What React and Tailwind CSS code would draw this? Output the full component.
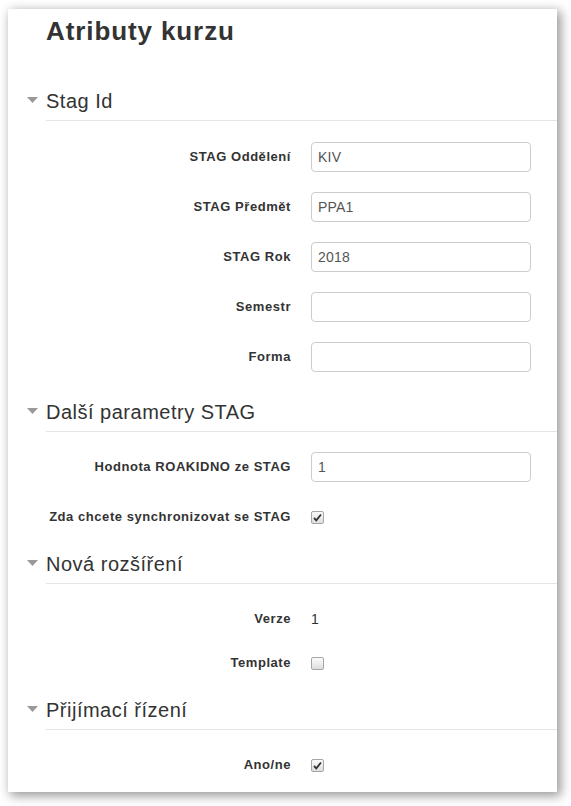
const font = { fontFamily: '"Liberation Sans", Arial, sans-serif' };

const Check = ({ checked }) => (
  <span className="flex h-[13px] w-[13px] items-center justify-center rounded-[2px] border border-[#a6a6a6] bg-gradient-to-b from-[#fbfbfb] to-[#dedede]">
    {checked && (
      <svg width="9" height="9" viewBox="0 0 9 9">
        <path d="M1 5 L3.3 7.3 L8 1.5" fill="none" stroke="#333" strokeWidth="1.8" />
      </svg>
    )}
  </span>
);

const Header = ({ title }) => (
  <div className="relative flex h-[41px] items-center border-b border-[#e5e5e5] pt-[1px]">
    <svg className="absolute left-[-19px] top-[17px]" width="11" height="6" viewBox="0 0 11 6">
      <path d="M0 0 L11 0 L5.5 6 Z" fill="#999" />
    </svg>
    <span className="text-[20px] tracking-[0.5px] text-[#333]">{title}</span>
  </div>
);

const Row = ({ label, children, mb }) => (
  <div className={`flex h-[30px] items-center ${mb}`}>
    <div className="w-[245px] text-right text-[13px] font-bold tracking-[0.55px] text-[#333]">{label}</div>
    <div className="ml-[20px] flex items-center">{children}</div>
  </div>
);

const Input = ({ value }) => (
  <div className="flex h-[30px] w-[220px] items-center rounded-[4px] border border-[#ccc] px-[6px] text-[14px] tracking-[0.2px] text-[#555]">
    {value}
  </div>
);

export default function App() {
  return (
    <div className="min-h-[806px] bg-white pl-[8px] pt-[9px]" style={font}>
      <div className="w-[549px] bg-white pb-[12px] pl-[38px] shadow-[3px_3px_10px_1px_rgba(0,0,0,0.4)]">
        <h2 className="flex h-[38px] items-end text-[26px] font-bold leading-[32px] tracking-[0.9px] text-[#333]">Atributy kurzu</h2>

        <div className="mt-[33px]">
          <Header title="Stag Id" />
          <div className="pt-[21px]">
            <Row label="STAG Oddělení" mb="mb-[20px]"><Input value="KIV" /></Row>
            <Row label="STAG Předmět" mb="mb-[20px]"><Input value="PPA1" /></Row>
            <Row label="STAG Rok" mb="mb-[20px]"><Input value="2018" /></Row>
            <Row label="Semestr" mb="mb-[20px]"><Input value="" /></Row>
            <Row label="Forma" mb="mb-[19px]"><Input value="" /></Row>
          </div>
        </div>

        <Header title="Další parametry STAG" />
        <div className="pt-[20px]">
          <Row label="Hodnota ROAKIDNO ze STAG" mb="mb-[20px]"><Input value="1" /></Row>
          <Row label="Zda chcete synchronizovat se STAG" mb="mb-[11px]"><Check checked /></Row>
        </div>

        <Header title="Nová rozšíření" />
        <div className="pt-[20px]">
          <Row label="Verze" mb="mb-[14px]"><span className="text-[14px] text-[#333]">1</span></Row>
          <Row label="Template" mb="mb-[11px]"><Check /></Row>
        </div>

        <Header title="Přijímací řízení" />
        <div className="pt-[20px]">
          <Row label="Ano/ne" mb="mb-0"><Check checked /></Row>
        </div>
      </div>
    </div>
  );
}
